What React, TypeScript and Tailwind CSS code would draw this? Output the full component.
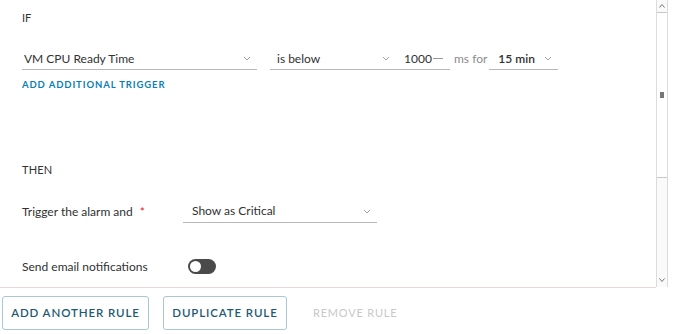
import React from 'react';

function Chevron({ className = '' }: { className?: string }) {
  return (
    <svg className={className} width="8" height="5" viewBox="0 0 8 5" fill="none">
      <path d="M1 1l3 3 3-3" stroke="#a3a3a3" strokeWidth="1" />
    </svg>
  );
}

function Select({ value, className = '', bold = false }: { value: string; className?: string; bold?: boolean }) {
  return (
    <div className={`flex items-center justify-between border-b border-[#b8b8b8] h-[22px] ${className}`}>
      <span className={`text-[12px] text-[#313131] ${bold ? 'font-semibold' : ''}`}>{value}</span>
      <Chevron className="mr-[6px]" />
    </div>
  );
}

export default function App() {
  return (
    <div className="w-[678px] h-[334px] bg-white flex flex-col overflow-hidden" style={{ fontFamily: 'Lato, "Open Sans", sans-serif' }}>
      <div className="flex h-[287px]">
        {/* Form content */}
        <div className="flex-1 pl-[22px] pt-[10px]">
          <div className="text-[11px] text-[#313131] h-[16px] leading-[16px]">IF</div>

          <div className="flex items-center mt-[22px] h-[22px]">
            <Select value="VM CPU Ready Time" className="w-[235px] pl-[2px]" />
            <Select value="is below" className="w-[126px] ml-[13px] pl-[7px]" />
            <div className="flex items-center border-b border-[#b8b8b8] h-[22px] w-[54px] pl-[8px]">
              <span className="text-[12px] text-[#313131]">1000</span>
              <span className="ml-[1px] w-[10px] h-px bg-[#9a9a9a]" />
            </div>
            <span className="text-[12px] text-[#8c8c8c] ml-[4px]">ms for</span>
            <Select value="15 min" bold className="w-[69px] ml-[2px] pl-[9px]" />
          </div>

          <div className="mt-[8px] text-[9.5px] font-bold tracking-[0.9px] text-[#0a7fb3]">ADD ADDITIONAL TRIGGER</div>

          <div className="mt-[70px] text-[11px] text-[#313131] tracking-[0.2px]">THEN</div>

          <div className="flex items-center mt-[22px] h-[22px]">
            <span className="text-[12px] text-[#313131] w-[161px]">
              Trigger the alarm and <span className="text-[#e02424] ml-[4px]">*</span>
            </span>
            <Select value="Show as Critical" className="w-[194px] pl-[9px]" />
          </div>

          <div className="flex items-center mt-[35px]">
            <span className="text-[12px] text-[#313131] w-[166px]">Send email notifications</span>
            <div className="w-[28px] h-[15px] rounded-full bg-[#4a4a4a] flex items-center px-[2px]">
              <div className="w-[11px] h-[11px] rounded-full bg-white" />
            </div>
          </div>
        </div>

        {/* Scrollbar */}
        <div className="w-[12px] mr-[10px] border-x border-[#dcdcdc] flex flex-col items-center bg-[#fafafa]">
          <div className="h-[12px] flex items-center justify-center">
            <svg width="6" height="4" viewBox="0 0 6 4"><path d="M0.5 3.5l2.5-3 2.5 3" stroke="#777" fill="none" /></svg>
          </div>
          <div className="w-full h-[166px] border-y border-[#c8c8c8] bg-white flex items-center justify-center">
            <div className="w-[4px] h-[6px] bg-[#777]" />
          </div>
          <div className="flex-1" />
          <div className="h-[14px] flex items-center justify-center">
            <svg width="6" height="4" viewBox="0 0 6 4"><path d="M0.5 0.5l2.5 3 2.5-3" stroke="#777" fill="none" /></svg>
          </div>
        </div>
      </div>

      <div className="h-px bg-[#f0d4d8] w-[656px]" />

      {/* Buttons */}
      <div className="flex items-center pl-[2px] pt-[8px] gap-[14px]">
        <button className="h-[34px] w-[147px] border border-[#a9c7d4] rounded-[3px] text-[11.5px] font-semibold tracking-[0.9px] text-[#1c5a73]">
          ADD ANOTHER RULE
        </button>
        <button className="h-[34px] w-[124px] border border-[#a9c7d4] rounded-[3px] text-[11.5px] font-semibold tracking-[0.9px] text-[#1c5a73]">
          DUPLICATE RULE
        </button>
        <span className="ml-[12px] text-[11px] tracking-[0.8px] text-[#c8c8c8]">REMOVE RULE</span>
      </div>
    </div>
  );
}
